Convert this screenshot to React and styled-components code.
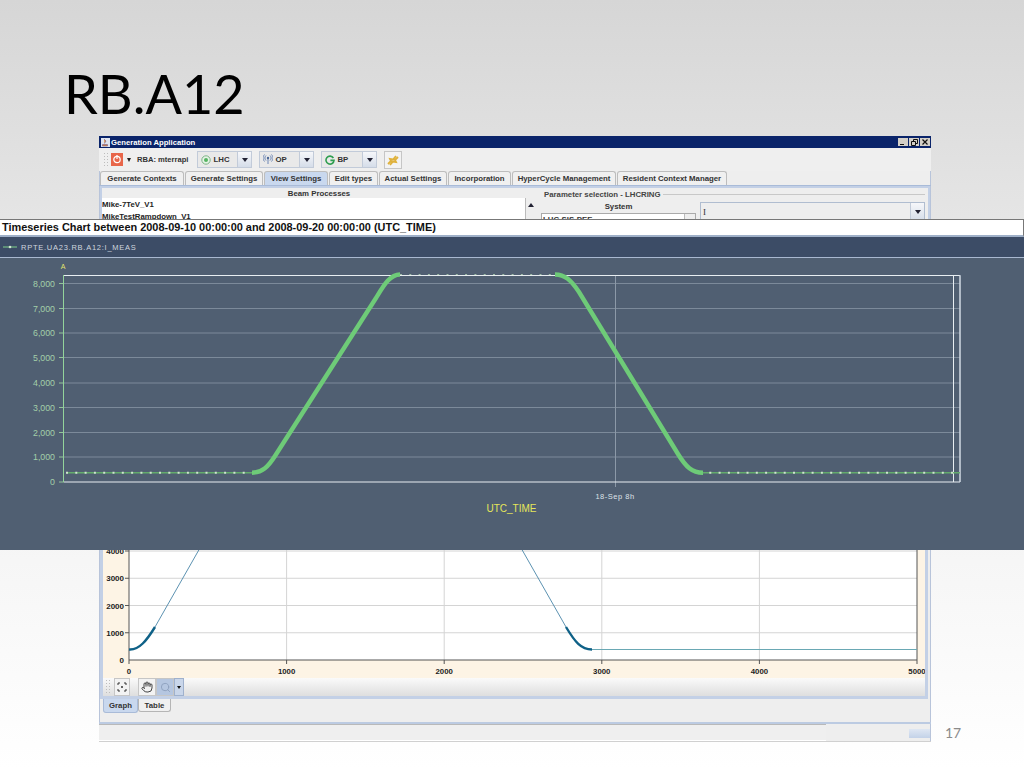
import styled, { createGlobalStyle } from "styled-components";
import { Hand, Search } from "lucide-react";

const GlobalStyle = createGlobalStyle`
  html, body {
    margin: 0;
    padding: 0;
    background: #fff;
  }
`;

const Slide = styled.div`
  position: relative;
  width: 1024px;
  height: 768px;
  overflow: hidden;
  background: linear-gradient(180deg, #d6d6d6 0%, #e6e6e6 30%, #f5f5f5 70%, #ffffff 100%);
  font-family: "Liberation Sans", Arial, sans-serif;
`;

const Title = styled.h1`
  margin: 0;
  padding: 59px 0 0 64px;
  height: 77px;
  font-family: Lato, "Open Sans", sans-serif;
  font-size: 54px;
  line-height: 70px;
  font-weight: 400;
  color: #000;
`;

const Row = styled.div`
  display: flex;
  align-items: flex-end;
  padding-left: 99px;
  gap: 14px;
`;

const Window = styled.div`
  width: 832px;
  height: 606px;
  display: flex;
  flex-direction: column;
  background: #eeeeee;
  box-shadow: inset 1px 0 #b8c4da, inset -1px 0 #b8c4da;
  font-size: 7.8px;
  font-weight: 700;
  color: #333;
`;

const TitleBar = styled.div`
  flex: none;
  height: 12px;
  background: #0a246a;
  display: flex;
  align-items: center;
  padding: 0 1px 0 2px;
  gap: 1px;
  color: #fff;
  font-size: 7.7px;
`;

const TitleText = styled.span`
  flex: 1;
`;

const WinButton = styled.span`
  width: 10px;
  height: 8px;
  background: #d4d0c8;
  color: #222;
  display: flex;
  align-items: center;
  justify-content: center;
`;

const Toolbar = styled.div`
  flex: none;
  height: 23px;
  display: flex;
  align-items: center;
  padding-left: 4px;
  gap: 7px;
  background: #efefef;
`;

const Grip = styled.div`
  width: 6px;
  height: 16px;
  margin-right: ${(p) => p.$after}px;
  background-image: radial-gradient(circle, #bdbdbd 35%, transparent 45%);
  background-size: 3px 3px;
`;

const RbaGroup = styled.div`
  display: flex;
  align-items: center;
  gap: 4px;
  margin-right: 2px;
`;

const RbaArrow = styled.span`
  border-left: 2.5px solid transparent;
  border-right: 2.5px solid transparent;
  border-top: 4px solid #222;
  margin-right: 2px;
`;

const RbaLabel = styled.span`
  font-size: 7.6px;
`;

const Combo = styled.div`
  width: ${(p) => p.$w}px;
  height: 17px;
  display: flex;
  align-items: center;
  border: 1px solid #c2cbd9;
  background: #e9e9e9;
  box-sizing: border-box;
  gap: 2px;
  padding-left: 3px;
`;

const ComboText = styled.span`
  flex: 1;
`;

const ComboArrow = styled.span`
  flex: none;
  width: 13px;
  height: 100%;
  display: flex;
  align-items: center;
  justify-content: center;
  border-left: 1px solid #c2cbd9;
  background: linear-gradient(180deg, #f6f7fa, #d5dde9);
  &::after {
    content: "";
    border-left: 3.5px solid transparent;
    border-right: 3.5px solid transparent;
    border-top: 4px solid #223;
  }
`;

const SquareButton = styled.div`
  width: ${(p) => p.$w || 18}px;
  height: 18px;
  border: 1px solid #c6c6c6;
  box-sizing: border-box;
  display: flex;
  align-items: center;
  justify-content: center;
  background: ${(p) => (p.$active ? "#b5c6e0" : "#f3f3f3")};
`;

const TabRow = styled.div`
  flex: none;
  height: 15px;
  display: flex;
  padding-left: 1px;
  gap: 1px;
  border-bottom: 1px solid #a9bbd8;
  box-sizing: border-box;
`;

const Tab = styled.div`
  width: ${(p) => p.$w}px;
  height: 14px;
  display: flex;
  align-items: center;
  justify-content: center;
  border: 1px solid #bdbdbd;
  border-bottom: none;
  border-radius: 3px 3px 0 0;
  background: ${(p) => (p.$active ? "#c9d8ee" : "#f0f0f0")};
  box-sizing: border-box;
  white-space: nowrap;
`;

const TopPanel = styled.div`
  display: flex;
  flex: 1;
  min-height: 0;
  overflow: hidden;
  margin: 0 1px;
  border: 2px solid #c3d0e6;
  border-bottom: none;
  box-sizing: border-box;
`;

const BeamColumn = styled.div`
  width: 434px;
  display: flex;
  flex-direction: column;
`;

const ColumnHead = styled.div`
  height: 10px;
  line-height: 11px;
  text-align: center;
`;

const ListRow = styled.div`
  flex: 1;
  display: flex;
`;

const ListBox = styled.div`
  flex: 1;
  background: #fff;
  padding: 1px 0;
  line-height: 12px;
  color: #222;
`;

const ScrollBar = styled.div`
  flex: none;
  width: 11px;
  background: #eee;
  border-left: 1px solid #bbb;
  box-sizing: border-box;
  display: flex;
  justify-content: center;
  padding-top: 5px;
  &::before {
    content: "";
    height: 0;
    border-left: 3px solid transparent;
    border-right: 3px solid transparent;
    border-bottom: 4px solid #223;
  }
`;

const Splitter = styled.div`
  flex: none;
  width: 5px;
`;

const ParamColumn = styled.div`
  flex: 1;
  padding: 1px 3px 0 0;
`;

const ParamHead = styled.div`
  display: flex;
  align-items: center;
  gap: 2px;
  height: 10px;
  color: #444;
  padding-left: 3px;
  &::after {
    content: "";
    flex: 1;
    border-top: 1px solid #c8c8c8;
  }
`;

const ParamBody = styled.div`
  display: flex;
  gap: 4px;
`;

const SystemBox = styled.div`
  width: 155px;
  margin-top: 3px;
  text-align: center;
  line-height: 10px;
`;

const SystemList = styled.div`
  margin-top: 1px;
  height: 40px;
  display: flex;
  border: 1px solid #aaa;
  background: #fff;
  text-align: left;
`;

const SystemItem = styled.div`
  flex: 1;
  padding-left: 1px;
  line-height: 11px;
`;

const ISelect = styled.div`
  flex: 1;
  height: 18px;
  margin-top: 3px;
  display: flex;
  align-items: center;
  justify-content: space-between;
  padding-left: 2px;
  border: 1px solid #b0bdd0;
  font-family: "Liberation Serif", serif;
  font-size: 9px;
  font-weight: 400;
`;

const PlotPanel = styled.div`
  flex: none;
  margin: 0 3px 0 1px;
  height: 174px;
  border-left: 3px solid #c3d0e6;
  border-right: 3px solid #c3d0e6;
  background: #fdf4e5;
`;

const PlotSvg = styled.svg`
  display: block;
`;

const PlotTools = styled.div`
  flex: none;
  margin: 0 3px 0 1px;
  height: 21px;
  display: flex;
  align-items: center;
  padding-left: 2px;
  border: 3px solid #c3d0e6;
  border-top: none;
  box-sizing: border-box;
  background: linear-gradient(180deg, #fafafa, #dedede);
`;

const ToolFit = styled.div`
  margin: 0 8px 0 3px;
`;

const DropArrow = styled.div`
  width: 10px;
  height: 18px;
  display: flex;
  align-items: center;
  justify-content: center;
  background: #c9d6ea;
  border: 1px solid #9fb1cd;
  box-sizing: border-box;
  &::after {
    content: "";
    border-left: 2px solid transparent;
    border-right: 2px solid transparent;
    border-top: 3px solid #111;
  }
`;

const BottomTabs = styled.div`
  flex: none;
  height: 25px;
  display: flex;
  padding-left: 4px;
  align-items: flex-start;
  border-bottom: 2px solid #bccbe2;
  box-sizing: border-box;
`;

const BottomTab = styled.div`
  height: ${(p) => (p.$active ? 14 : 13)}px;
  width: ${(p) => (p.$active ? 35 : 33)}px;
  display: flex;
  align-items: center;
  justify-content: center;
  background: ${(p) => (p.$active ? "#c9d8ee" : "#f0f0f0")};
  border: 1px solid ${(p) => (p.$active ? "#a9bbd8" : "#b5b5b5")};
  border-top: none;
  border-radius: 0 0 3px 3px;
  box-sizing: border-box;
`;

const StatusBar = styled.div`
  flex: none;
  height: 18px;
  display: flex;
  border-bottom: 1px solid #d0d0d0;
  box-sizing: border-box;
`;

const StatusField = styled.div`
  width: 727px;
  background: #efefef;
  border-top: 1px solid #b9b9b9;
  border-bottom: 1px solid #fff;
  box-sizing: border-box;
`;

const StatusGrip = styled.div`
  flex: 1;
  display: flex;
  align-items: flex-end;
  justify-content: flex-end;
  padding: 0 1px 3px;
`;

const GripMark = styled.div`
  width: 21px;
  height: 9px;
  background: linear-gradient(180deg, #dfe7f3, #c3d2e8);
`;

const PageNumber = styled.div`
  font-family: Lato, "Open Sans", sans-serif;
  font-size: 14px;
  line-height: 18px;
  color: #8b8b8b;
`;

const Overlay = styled.div`
  position: absolute;
  left: 0;
  top: 219px;
  width: 1024px;
  height: 331px;
  display: flex;
  flex-direction: column;
  background: #505f72;
`;

const ChartTitle = styled.div`
  flex: none;
  height: 18px;
  line-height: 15px;
  padding-left: 2px;
  box-sizing: border-box;
  background: #fff;
  border: 1px solid #777;
  border-width: 1px 1px 2px 0;
  border-bottom-color: #9fb0c8;
  font-size: 10.93px;
  font-weight: 700;
  color: #111;
`;

const LegendBar = styled.div`
  flex: none;
  height: 21px;
  display: flex;
  align-items: center;
  gap: 4px;
  padding-left: 3px;
  box-sizing: border-box;
  background: #3c4c66;
  border-bottom: 1px solid #a9b8d0;
  font-size: 7.5px;
  letter-spacing: 0.75px;
  color: #cfd6df;
`;

const yTicks = [
  [8000, 283.5],
  [7000, 308.5],
  [6000, 333],
  [5000, 357.5],
  [4000, 383],
  [3000, 407.5],
  [2000, 432.5],
  [1000, 457],
  [0, 482],
];

const fmt = (n) => n.toLocaleString("en-US");

function TimeChart() {
  const off = 258;
  return (
    <PlotSvg width="1024" height="292" viewBox={`0 ${off} 1024 292`}>
      {yTicks.map(([v, y]) => (
        <g key={v}>
          {v > 0 && <line x1="64" x2="960" y1={y} y2={y} stroke="#7c8a9a" />}
          <line x1="59" x2="64" y1={y} y2={y} stroke="#93c49b" />
          <text x="55" y={y + 3} textAnchor="end" fontSize="8.8" fill="#a3cfa9" fontFamily="Liberation Sans">
            {fmt(v)}
          </text>
        </g>
      ))}
      <line x1="615.5" x2="615.5" y1="275" y2="487" stroke="#8c99a8" />
      <text x="63" y="269" textAnchor="middle" fontSize="7" fill="#e3e36e" fontFamily="Liberation Sans">A</text>
      <line x1="63.5" x2="63.5" y1="275" y2="482" stroke="#93d49b" />
      <path d="M64 275.5H960V482H64" fill="none" stroke="#e8eef2" />
      <line x1="953.5" x2="953.5" y1="275" y2="482" stroke="#e8eef2" />
      <line x1="960" x2="960" y1="275" y2="482" stroke="#c6d0dc" />
      <path d="M66 472.7H255M700 472.7H960" stroke="#63ab6c" strokeWidth="1.6" fill="none" />
      <path d="M66 472.7H255M700 472.7H960" stroke="#cfe4cf" strokeWidth="2" strokeDasharray="2 7.3" fill="none" />
      <path d="M400 274.5H555" stroke="#9fbfa6" strokeWidth="1" strokeDasharray="2 7.3" fill="none" />
      <path
        d="M252 472.7C262 472.7 268 467 275 456L376 298C384 285 390 274.5 400 274.5M555 274.5C565 274.5 571 280 579 292L678 454C686 467 692 472.7 703 472.7"
        stroke="#6ecb78"
        strokeWidth="4.4"
        fill="none"
      />
      <text x="615" y="499" textAnchor="middle" fontSize="7.5" letterSpacing="0.5" fill="#dde2e8" fontFamily="Liberation Sans">18-Sep 8h</text>
      <text x="511.5" y="512" textAnchor="middle" fontSize="10" fill="#e6e65a" fontFamily="Liberation Sans">UTC_TIME</text>
    </PlotSvg>
  );
}

function RawPlot() {
  const xs = [0, 1000, 2000, 3000, 4000, 5000];
  const ys = [1000, 2000, 3000, 4000];
  const px = (v) => 26 + v * 0.1576;
  const py = (v) => 156 - v * 0.02725;
  return (
    <PlotSvg width="822" height="174" viewBox="0 0 822 174">
      <rect x="26" y="0" width="788" height="156" fill="#fff" />
      {ys.map((v) => (
        <g key={v}>
          <line x1="26" x2="814" y1={py(v)} y2={py(v)} stroke="#d4d4d4" />
          <line x1="22" x2="26" y1={py(v)} y2={py(v)} stroke="#555" />
          <text x="21" y={py(v) + 3} textAnchor="end" fontSize="8" fontWeight="700" fill="#222" fontFamily="Liberation Sans">{v}</text>
        </g>
      ))}
      <text x="21" y="159" textAnchor="end" fontSize="8" fontWeight="700" fill="#222" fontFamily="Liberation Sans">0</text>
      {xs.map((v) => (
        <g key={v}>
          {v > 0 && v < 5000 && <line x1={px(v)} x2={px(v)} y1="0" y2="156" stroke="#d4d4d4" />}
          <line x1={px(v)} x2={px(v)} y1="156" y2="160" stroke="#555" />
          <text x={px(v)} y="170" textAnchor="middle" fontSize="7.8" fontWeight="700" fill="#222" fontFamily="Liberation Sans">{v}</text>
        </g>
      ))}
      <path d="M26 0V156H814V0" fill="none" stroke="#555" />
      <path d="M52 123L122 0" stroke="#4a86a8" fill="none" strokeWidth="0.9" />
      <path d="M393 0L463 123" stroke="#4a86a8" fill="none" strokeWidth="0.9" />
      <path d="M489 145.5H814" stroke="#6aa8b4" fill="none" />
      <path d="M26 145.5C36 146.5 44 136 52 123" stroke="#0f6187" strokeWidth="2.4" fill="none" />
      <path d="M463 123C472 138 478 145.5 489 145.5" stroke="#0f6187" strokeWidth="2.4" fill="none" />
    </PlotSvg>
  );
}

function TimerIcon() {
  return (
    <svg width="12" height="13" viewBox="0 0 12 13">
      <rect width="12" height="13" fill="#e8664a" />
      <circle cx="6" cy="6.5" r="3.2" fill="none" stroke="#fff" strokeWidth="1.2" />
      <line x1="6" x2="6" y1="2" y2="6" stroke="#fff" strokeWidth="1.2" />
    </svg>
  );
}

function LhcIcon() {
  return (
    <svg width="10" height="10" viewBox="0 0 10 10">
      <circle cx="5" cy="5" r="4.2" fill="#e6f3e6" stroke="#7db487" />
      <circle cx="5" cy="5" r="2" fill="#55b462" />
    </svg>
  );
}

function OpIcon() {
  return (
    <svg width="10" height="11" viewBox="0 0 10 11">
      <path d="M5 3V10M3 1.5C1.5 3 1.5 5 3 6.5M7 1.5C8.5 3 8.5 5 7 6.5M1.5 0.5C-0.5 3 -0.5 5 1.5 7.5M8.5 0.5C10.5 3 10.5 5 8.5 7.5" fill="none" stroke="#6c86b4" strokeWidth="1" />
      <circle cx="5" cy="4" r="1.2" fill="#4c6796" />
    </svg>
  );
}

function BpIcon() {
  return (
    <svg width="10" height="10" viewBox="0 0 10 10">
      <path d="M8.4 3A4 4 0 1 0 9 5.4H5.4" fill="none" stroke="#2f9e50" strokeWidth="1.6" />
    </svg>
  );
}

function JavaIcon() {
  return (
    <svg width="9" height="9" viewBox="0 0 9 9">
      <rect width="9" height="9" fill="#dfe5f0" />
      <path d="M1.5 6.5H6.5V8H1.5ZM3 1L5 3L3.5 5.5" fill="#d8893c" stroke="#7a5a8c" strokeWidth="0.6" />
    </svg>
  );
}

export default function App() {
  return (
    <>
      <GlobalStyle />
      <Slide>
        <Title>RB.A12</Title>
        <Row>
          <Window>
            <TitleBar>
              <JavaIcon />
              <TitleText>Generation Application</TitleText>
              <WinButton>
                <svg width="6" height="6" viewBox="0 0 6 6">
                  <path d="M0 5.5H4" stroke="#111" />
                </svg>
              </WinButton>
              <WinButton>
                <svg width="7" height="7" viewBox="0 0 7 7">
                  <path d="M2.5 2V0.5H6.5V4.5H5M0.5 2.5H4.5V6.5H0.5Z" fill="none" stroke="#111" />
                </svg>
              </WinButton>
              <WinButton>
                <svg width="6" height="6" viewBox="0 0 6 6">
                  <path d="M0.5 0.5L5.5 5.5M5.5 0.5L0.5 5.5" stroke="#111" strokeWidth="1.2" />
                </svg>
              </WinButton>
            </TitleBar>
            <Toolbar>
              <RbaGroup>
                <Grip $after={-2} />
                <TimerIcon />
                <RbaArrow />
                <RbaLabel>RBA: mterrapi</RbaLabel>
              </RbaGroup>
              <Combo $w={55}>
                <LhcIcon />
                <ComboText>LHC</ComboText>
                <ComboArrow />
              </Combo>
              <Combo $w={55}>
                <OpIcon />
                <ComboText>OP</ComboText>
                <ComboArrow />
              </Combo>
              <Combo $w={56}>
                <BpIcon />
                <ComboText>BP</ComboText>
                <ComboArrow />
              </Combo>
              <SquareButton>
                <svg width="12" height="12" viewBox="0 0 12 12">
                  <path d="M1 10L4 7L3 5L6 5.5L9 2M11 3L8 6L9 8L6 7.5L3 11" fill="none" stroke="#dfb13a" strokeWidth="1.8" />
                </svg>
              </SquareButton>
            </Toolbar>
            <TabRow>
              <Tab $w={84}>Generate Contexts</Tab>
              <Tab $w={78}>Generate Settings</Tab>
              <Tab $w={64} $active>View Settings</Tab>
              <Tab $w={49}>Edit types</Tab>
              <Tab $w={68}>Actual Settings</Tab>
              <Tab $w={63}>Incorporation</Tab>
              <Tab $w={104}>HyperCycle Management</Tab>
              <Tab $w={110}>Resident Context Manager</Tab>
            </TabRow>
            <TopPanel>
              <BeamColumn>
                <ColumnHead>Beam Processes</ColumnHead>
                <ListRow>
                  <ListBox>
                    Mike-7TeV_V1
                    <br />
                    MikeTestRampdown_V1
                  </ListBox>
                  <ScrollBar />
                </ListRow>
              </BeamColumn>
              <Splitter />
              <ParamColumn>
                <ParamHead>Parameter selection - LHCRING</ParamHead>
                <ParamBody>
                  <SystemBox>
                    System
                    <SystemList>
                      <SystemItem>LHC-SIS-PEE</SystemItem>
                      <ScrollBar />
                    </SystemList>
                  </SystemBox>
                  <ISelect>
                    I
                    <ComboArrow />
                  </ISelect>
                </ParamBody>
              </ParamColumn>
            </TopPanel>
            <PlotPanel>
              <RawPlot />
            </PlotPanel>
            <PlotTools>
              <Grip $after={0} />
              <ToolFit>
                <SquareButton $w={16}>
                  <svg width="10" height="10" viewBox="0 0 10 10">
                    <path d="M1 1h2M7 1h2M1 9h2M7 9h2M1 1v2M9 1v2M1 7v2M9 7v2M5 4v2M4 5h2" stroke="#333" />
                  </svg>
                </SquareButton>
              </ToolFit>
              <SquareButton>
                <Hand size={12} color="#444" strokeWidth={2} />
              </SquareButton>
              <SquareButton $active>
                <Search size={11} color="#8da0bd" strokeWidth={2} />
              </SquareButton>
              <DropArrow />
            </PlotTools>
            <BottomTabs>
              <BottomTab $active>Graph</BottomTab>
              <BottomTab>Table</BottomTab>
            </BottomTabs>
            <StatusBar>
              <StatusField />
              <StatusGrip>
                <GripMark />
              </StatusGrip>
            </StatusBar>
          </Window>
          <PageNumber>17</PageNumber>
        </Row>
        <Overlay>
          <ChartTitle>Timeseries Chart between 2008-09-10 00:00:00 and 2008-09-20 00:00:00 (UTC_TIME)</ChartTitle>
          <LegendBar>
            <svg width="14" height="6" viewBox="0 0 14 6">
              <line x1="0" x2="14" y1="3" y2="3" stroke="#7fd08a" />
              <circle cx="7" cy="3" r="1.3" fill="#cfe8d0" />
            </svg>
            RPTE.UA23.RB.A12:I_MEAS
          </LegendBar>
          <TimeChart />
        </Overlay>
      </Slide>
    </>
  );
}
